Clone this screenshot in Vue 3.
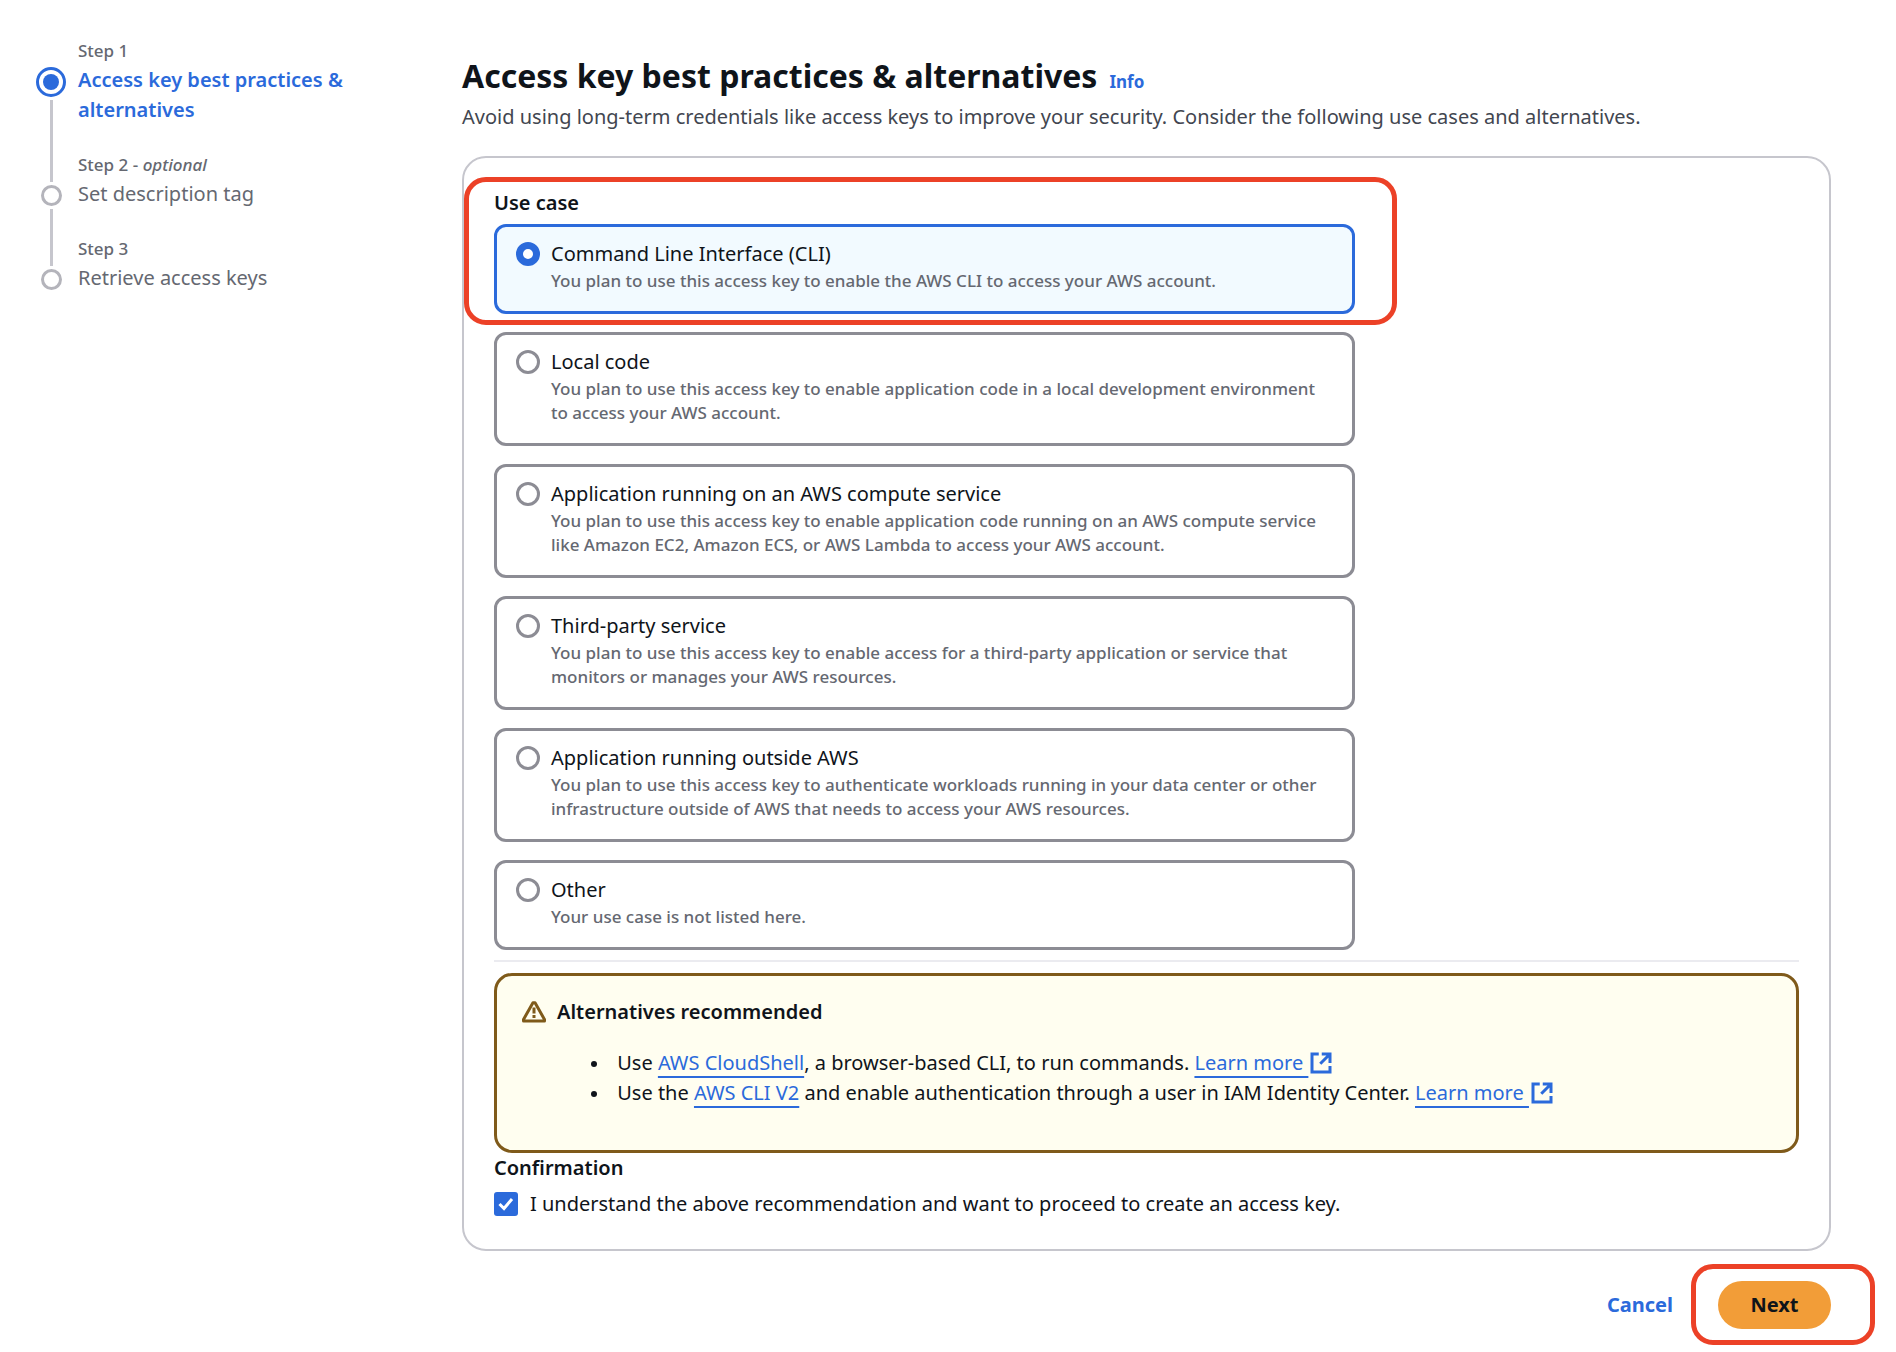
<script setup>
import { ref } from 'vue'

const steps = [
  { label: 'Step 1', title: 'Access key best practices & alternatives', current: true },
  { label: 'Step 2', optional: true, title: 'Set description tag' },
  { label: 'Step 3', title: 'Retrieve access keys' }
]

const useCases = [
  { id: 'cli', title: 'Command Line Interface (CLI)', text: 'You plan to use this access key to enable the AWS CLI to access your AWS account.' },
  { id: 'local', title: 'Local code', text: 'You plan to use this access key to enable application code in a local development environment to access your AWS account.' },
  { id: 'compute', title: 'Application running on an AWS compute service', text: 'You plan to use this access key to enable application code running on an AWS compute service like Amazon EC2, Amazon ECS, or AWS Lambda to access your AWS account.' },
  { id: 'third-party', title: 'Third-party service', text: 'You plan to use this access key to enable access for a third-party application or service that monitors or manages your AWS resources.' },
  { id: 'outside', title: 'Application running outside AWS', text: 'You plan to use this access key to authenticate workloads running in your data center or other infrastructure outside of AWS that needs to access your AWS resources.' },
  { id: 'other', title: 'Other', text: 'Your use case is not listed here.' }
]

const selected = ref('cli')
const confirmed = ref(true)
</script>

<template>
  <div class="page">
    <nav class="steps" aria-label="Steps">
      <ol>
        <li v-for="step in steps" :key="step.label" class="step" :class="{ current: step.current }">
          <span class="marker"><span class="dot"></span></span>
          <div class="step-text">
            <div class="step-label">{{ step.label }}<template v-if="step.optional"> - <i>optional</i></template></div>
            <div class="step-title">{{ step.title }}</div>
          </div>
        </li>
      </ol>
    </nav>

    <main class="content">
      <header class="heading">
        <h1>Access key best practices &amp; alternatives</h1>
        <a href="#info" class="info">Info</a>
      </header>
      <p class="intro">Avoid using long-term credentials like access keys to improve your security. Consider the following use cases and alternatives.</p>

      <section class="panel">
        <fieldset class="use-cases">
          <legend>Use case</legend>
          <div class="tiles">
            <label v-for="item in useCases" :key="item.id" class="tile" :class="{ selected: selected === item.id }">
              <input v-model="selected" type="radio" name="use-case" :value="item.id" />
              <span class="tile-text">
                <span class="tile-title">{{ item.title }}</span>
                <span class="tile-description">{{ item.text }}</span>
              </span>
            </label>
            <div class="highlight highlight-case"></div>
          </div>
        </fieldset>

        <hr />

        <div class="alert">
          <div class="alert-heading">
            <svg viewBox="0 0 16 16" width="24" height="24" fill="none" stroke="currentColor" stroke-width="2" stroke-linejoin="round" aria-hidden="true">
              <path d="M7.300 1.800h1.400L15 13v1H1v-1Z" />
              <path d="M8 5v4M8 10v2" />
            </svg>
            <h2>Alternatives recommended</h2>
          </div>
          <ul>
            <li>
              Use <a href="#cloudshell">AWS CloudShell</a>, a browser-based CLI, to run commands.
              <a href="#cloudshell-docs">Learn more&nbsp;</a><svg class="external" viewBox="0 0 16 16" width="24" height="24" fill="none" stroke="currentColor" stroke-width="2" aria-hidden="true"><path d="M6.500 2H2v12h12v-4M8.500 2H14v6M13.500 2.500 7.500 8.500" /></svg>
            </li>
            <li>
              Use the <a href="#cli-v2">AWS CLI V2</a> and enable authentication through a user in IAM Identity Center.
              <a href="#cli-docs">Learn more&nbsp;</a><svg class="external" viewBox="0 0 16 16" width="24" height="24" fill="none" stroke="currentColor" stroke-width="2" aria-hidden="true"><path d="M6.500 2H2v12h12v-4M8.500 2H14v6M13.500 2.500 7.500 8.500" /></svg>
            </li>
          </ul>
        </div>

        <h2 class="confirm-heading">Confirmation</h2>
        <label class="confirm">
          <span class="box">
            <input v-model="confirmed" type="checkbox" />
            <svg v-if="confirmed" viewBox="0 0 24 24" width="24" height="24" fill="none" stroke="#fff" stroke-width="3" aria-hidden="true"><path d="M5.500 12 10 16.500 18 7" /></svg>
          </span>
          <span>I understand the above recommendation and want to proceed to create an access key.</span>
        </label>
      </section>

      <footer class="actions">
        <button type="button" class="cancel">Cancel</button>
        <div class="next-wrap">
          <button type="button" class="next">Next</button>
          <div class="highlight highlight-next"></div>
        </div>
      </footer>
    </main>
  </div>
</template>

<style>
body {
  background: #fff;
}
</style>

<style scoped>
.page {
  display: flex;
  box-sizing: border-box;
  min-height: 100vh;
  padding: 37px 65px 23px 36px;
  font-family: "Noto Sans", "Open Sans", sans-serif;
  font-size: 20px;
  line-height: 30px;
  color: #0f141a;
}

.steps {
  flex: none;
  width: 336px;
  margin-right: 90px;
}

.steps ol {
  margin: 0;
  padding: 0;
  list-style: none;
}

.step {
  display: flex;
  gap: 12px;
  color: #656871;
}

.marker {
  display: flex;
  flex-direction: column;
  align-items: center;
  width: 30px;
  padding-top: 34px;
}

.dot {
  box-sizing: border-box;
  width: 21px;
  height: 21px;
  border: 3px solid #b4b4bb;
  border-radius: 50%;
}

.step:not(:last-child) .marker::after {
  content: "";
  flex: 1;
  width: 3px;
  margin: 3px 0 -31px;
  background: #c6c6cd;
}

.current .marker {
  padding-top: 30px;
}

.current .dot {
  width: 30px;
  height: 30px;
  background: #2b6adb;
  background-clip: content-box;
  border-color: #2b6adb;
  padding: 4px;
}

.step-text {
  flex: 1;
  padding-bottom: 26px;
}

.step-label {
  font-size: 17px;
  font-weight: 500;
  line-height: 28px;
}

.current .step-title {
  font-weight: 600;
  color: #2b6adb;
}

.content {
  flex: 1;
  min-width: 0;
}

.heading {
  display: flex;
  align-items: baseline;
  gap: 12px;
  padding-top: 15px;
}

h1 {
  margin: 0;
  font-size: 32px;
  line-height: 48px;
  font-weight: 700;
}

.info {
  font-size: 17px;
  font-weight: 700;
  text-decoration: none;
}

a {
  color: #2b6adb;
}

.intro {
  margin: 2px 0 24px;
  color: #424650;
}

.panel {
  box-sizing: border-box;
  padding: 30px;
  border: 2px solid #c6c6cd;
  border-radius: 24px;
}

.use-cases {
  margin: 0;
  padding: 0;
  border: 0;
}

legend {
  padding: 0 0 6px;
  font-weight: 600;
}

.tiles {
  position: relative;
  display: flex;
  flex-direction: column;
  gap: 18px;
  width: 66%;
}

.tile {
  display: flex;
  gap: 11px;
  box-sizing: border-box;
  padding: 12px 32px 18px 19px;
  border: 3px solid #8c8c94;
  border-radius: 12px;
}

.tile.selected {
  background: #f2faff;
  border-color: #2b6adb;
}

.tile input {
  appearance: none;
  flex: none;
  box-sizing: border-box;
  width: 24px;
  height: 24px;
  margin: 3px 0 0;
  border: 3px solid #8c8c94;
  border-radius: 50%;
  background: #fff;
}

.tile input:checked {
  border: 7px solid #2b6adb;
}

.tile-text {
  display: flex;
  flex-direction: column;
}

.tile-description {
  font-size: 17px;
  font-weight: 500;
  line-height: 24px;
  color: #656871;
}

.highlight {
  position: absolute;
  box-sizing: border-box;
  border: 5px solid #ec4127;
  border-radius: 22px;
  pointer-events: none;
}

.highlight-case {
  top: -47px;
  left: -30px;
  right: -42px;
  height: 148px;
}

hr {
  height: 2px;
  margin: 10px 0 11px;
  border: 0;
  background: #ebebf0;
}

.alert {
  padding: 21px 25px 42px;
  border: 3px solid #7f5a1a;
  border-radius: 18px;
  background: #fffef0;
}

.alert-heading {
  display: flex;
  align-items: center;
  gap: 11px;
}

.alert-heading svg {
  color: #7f5a1a;
}

h2 {
  margin: 0;
  font-size: 20px;
  line-height: 30px;
  font-weight: 600;
}

.alert ul {
  margin: 21px 0 0;
  padding-left: 95px;
  list-style: none;
}

.alert li::before {
  content: "";
  display: inline-block;
  width: 6px;
  height: 6px;
  margin: 0 15px 0 -26px;
  border-radius: 50%;
  background: #0f141a;
  vertical-align: 3px;
}

.alert a {
  text-decoration: underline;
  text-decoration-thickness: 2px;
  text-underline-offset: 6px;
}

.external {
  margin-left: 1px;
  color: #2b6adb;
  vertical-align: -5px;
}

.confirm {
  display: flex;
  align-items: center;
  gap: 12px;
  margin-top: 6px;
}

.box {
  position: relative;
  width: 24px;
  height: 24px;
}

.box input {
  appearance: none;
  display: block;
  width: 24px;
  height: 24px;
  margin: 0;
  border: 0;
  border-radius: 3px;
  background: #2b6adb;
}

.box svg {
  position: absolute;
  inset: 0;
  pointer-events: none;
}

.actions {
  display: flex;
  justify-content: flex-end;
  align-items: center;
  gap: 45px;
  padding-top: 30px;
}

button {
  padding: 0;
  border: 0;
  background: none;
  font: inherit;
  font-weight: 700;
}

.cancel {
  color: #2b6adb;
}

.next-wrap {
  position: relative;
}

.next {
  display: block;
  width: 113px;
  height: 48px;
  border-radius: 24px;
  background: #f29d38;
  color: #0f141a;
}

.highlight-next {
  inset: -17px -44px -16px -27px;
}
</style>
